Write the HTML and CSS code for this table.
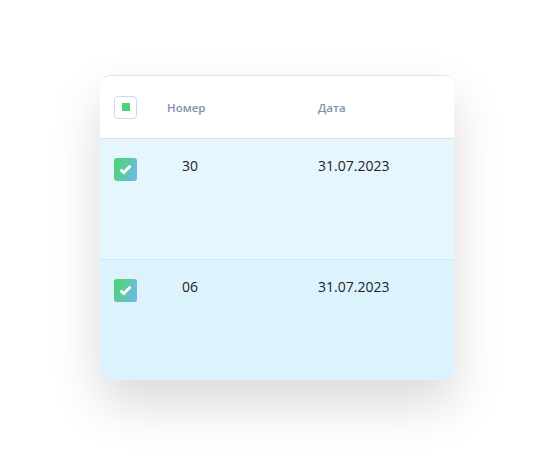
FILE: index.html
```html
<!DOCTYPE html>
<html lang="ru">
<head>
    <meta charset="UTF-8">
    <title>Таблица</title>
    <link rel="stylesheet" href="styles.css">
</head>
<body>
    <div class="card">
        <div class="row head">
            <div class="cell check"><span class="box box-partial"><span class="dot"></span></span></div>
            <div class="cell num">Номер</div>
            <div class="cell date">Дата</div>
        </div>
        <div class="row odd">
            <div class="cell check"><span class="box box-on">
                <svg width="13" height="11" viewBox="0 0 13 11"><path d="M1.5 5.6 L4.8 8.6 L11.5 1.8" fill="none" stroke="#fff" stroke-width="2.8"/></svg>
            </span></div>
            <div class="cell num value">30</div>
            <div class="cell date">31.07.2023</div>
        </div>
        <div class="row even">
            <div class="cell check"><span class="box box-on">
                <svg width="13" height="11" viewBox="0 0 13 11"><path d="M1.5 5.6 L4.8 8.6 L11.5 1.8" fill="none" stroke="#fff" stroke-width="2.8"/></svg>
            </span></div>
            <div class="cell num value">06</div>
            <div class="cell date">31.07.2023</div>
        </div>
    </div>
</body>
</html>
```

FILE: styles.css
```css
html,
body {
    min-height: 100%;
}

body {
    margin: 0;
    padding: 75px 0 80px 100px;
    background: #fff;
    font-family: "Open Sans", sans-serif;
    color: #222;
}

.card {
    width: 354px;
    border-top: 1px solid #e0e0ee;
    border-radius: 10px;
    overflow: hidden;
    box-shadow: 0 24px 50px rgba(0, 0, 0, 0.15);
}

.row {
    display: grid;
    grid-template-columns: 53px 165px 1fr;
}

.head {
    height: 62px;
    align-items: center;
    background: #fff;
    border-bottom: 1px solid #dde3ee;
    font-size: 11.5px;
    font-weight: 600;
    color: #8590b0;
}

.odd,
.even {
    height: 120px;
    align-items: start;
    font-size: 14px;
}

.odd {
    background: #e6f6fe;
    border-bottom: 1px solid #d2e6f0;
}

.even {
    background: #dcf3fe;
}

.cell.check {
    padding-left: 14px;
}

.odd .cell,
.even .cell {
    padding-top: 17px;
}

.odd .cell.check,
.even .cell.check {
    padding-top: 19px;
}

.num {
    padding-left: 14px;
}

.num.value {
    padding-left: 29px;
}

.box {
    display: flex;
    width: 23px;
    height: 23px;
    box-sizing: border-box;
    align-items: center;
    justify-content: center;
    border-radius: 4px;
}

.box-partial {
    border: 1px solid #d6d6ea;
    background: #fff;
}

.dot {
    width: 8px;
    height: 8px;
    background: #4cd47a;
}

.box-on {
    background: linear-gradient(110deg, #48d46a 0%, #5ccaa0 45%, #72b4f4 100%);
    border-radius: 3px;
}
```
